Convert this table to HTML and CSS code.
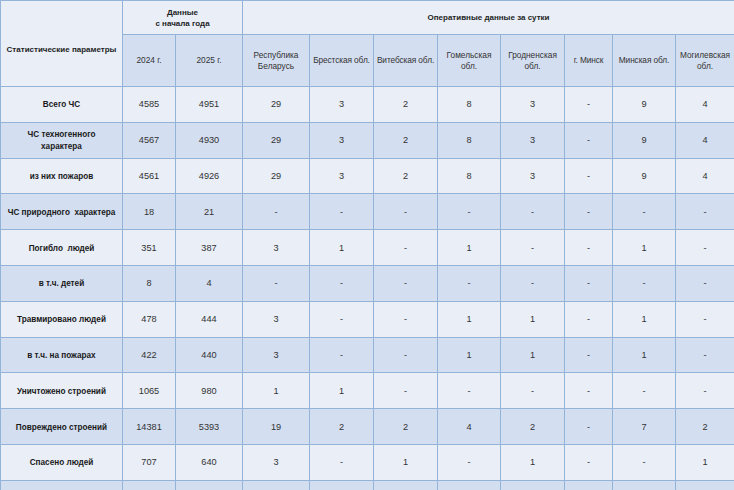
FILE: index.html
```html
<!DOCTYPE html>
<html lang="ru">
<head>
<meta charset="utf-8">
<title>Статистика ЧС</title>
<link rel="stylesheet" href="styles.css">
</head>
<body>
<table class="stats">
  <colgroup>
    <col class="c-param"><col class="c-y"><col class="c-y2">
    <col class="c-rb"><col class="c-br"><col class="c-vi"><col class="c-go">
    <col class="c-gr"><col class="c-mn"><col class="c-mo"><col class="c-mg">
  </colgroup>
  <thead>
    <tr class="h1">
      <th rowspan="2" class="param-head light">Статистические параметры</th>
      <th colspan="2" class="light">Данные<br>с начала года</th>
      <th colspan="9" class="light">Оперативные данные за сутки</th>
    </tr>
    <tr class="h2">
      <th class="sub">2024 г.</th>
      <th class="sub">2025 г.</th>
      <th class="sub">Республика<br>Беларусь</th>
      <th class="sub nowrap">Брестская обл.</th>
      <th class="sub nowrap">Витебская обл.</th>
      <th class="sub">Гомельская<br>обл.</th>
      <th class="sub">Гродненская<br>обл.</th>
      <th class="sub nowrap">г. Минск</th>
      <th class="sub nowrap">Минская обл.</th>
      <th class="sub">Могилевская<br>обл.</th>
    </tr>
  </thead>
  <tbody>
    <tr><th>Всего ЧС</th><td>4585</td><td>4951</td><td>29</td><td>3</td><td>2</td><td>8</td><td>3</td><td>-</td><td>9</td><td>4</td></tr>
    <tr><th>ЧС техногенного<br>характера</th><td>4567</td><td>4930</td><td>29</td><td>3</td><td>2</td><td>8</td><td>3</td><td>-</td><td>9</td><td>4</td></tr>
    <tr><th>из них пожаров</th><td>4561</td><td>4926</td><td>29</td><td>3</td><td>2</td><td>8</td><td>3</td><td>-</td><td>9</td><td>4</td></tr>
    <tr><th>ЧС природного&nbsp; характера</th><td>18</td><td>21</td><td>-</td><td>-</td><td>-</td><td>-</td><td>-</td><td>-</td><td>-</td><td>-</td></tr>
    <tr><th>Погибло&nbsp; людей</th><td>351</td><td>387</td><td>3</td><td>1</td><td>-</td><td>1</td><td>-</td><td>-</td><td>1</td><td>-</td></tr>
    <tr><th>в т.ч. детей</th><td>8</td><td>4</td><td>-</td><td>-</td><td>-</td><td>-</td><td>-</td><td>-</td><td>-</td><td>-</td></tr>
    <tr><th>Травмировано людей</th><td>478</td><td>444</td><td>3</td><td>-</td><td>-</td><td>1</td><td>1</td><td>-</td><td>1</td><td>-</td></tr>
    <tr><th>в т.ч. на пожарах</th><td>422</td><td>440</td><td>3</td><td>-</td><td>-</td><td>1</td><td>1</td><td>-</td><td>1</td><td>-</td></tr>
    <tr><th>Уничтожено строений</th><td>1065</td><td>980</td><td>1</td><td>1</td><td>-</td><td>-</td><td>-</td><td>-</td><td>-</td><td>-</td></tr>
    <tr><th>Повреждено строений</th><td>14381</td><td>5393</td><td>19</td><td>2</td><td>2</td><td>4</td><td>2</td><td>-</td><td>7</td><td>2</td></tr>
    <tr><th>Спасено людей</th><td>707</td><td>640</td><td>3</td><td>-</td><td>1</td><td>-</td><td>1</td><td>-</td><td>-</td><td>1</td></tr>
    <tr><th>&nbsp;</th><td></td><td></td><td></td><td></td><td></td><td></td><td></td><td></td><td></td><td></td></tr>
  </tbody>
</table>
</body>
</html>
```
FILE: styles.css
```css
html, body {
  margin: 0;
  padding: 0;
  background: #ffffff;
}

body {
  font-family: "Liberation Sans", Arial, sans-serif;
  color: #333333;
  overflow: hidden;
}

.stats {
  border-collapse: collapse;
  table-layout: fixed;
  width: 734px;
}

.c-param { width: 122px; }
.c-y { width: 53px; }
.c-y2 { width: 67px; }
.c-rb { width: 67px; }
.c-br { width: 64px; }
.c-vi { width: 64px; }
.c-go { width: 63px; }
.c-gr { width: 64px; }
.c-mn { width: 48px; }
.c-mo { width: 63px; }
.c-mg { width: 59px; }

.stats th,
.stats td {
  border: 1px solid #94b3d9;
  text-align: center;
  vertical-align: middle;
  padding: 0 1px;
  background: #e9eef7;
}

.stats thead th {
  font-size: 8px;
  line-height: 11px;
  color: #1e1e1e;
  font-weight: bold;
}

.stats thead .sub {
  font-weight: normal;
  font-size: 8.3px;
  color: #333333;
  background: #d3def0;
}

.stats thead .nowrap {
  white-space: nowrap;
  letter-spacing: -0.1px;
}

.stats .param-head {
  padding-top: 12px;
}

.h1 { height: 34px; }
.h2 { height: 52px; }

.stats tbody tr { height: 35.8px; }

.stats tbody th {
  font-size: 8.2px;
  line-height: 12px;
  font-weight: bold;
  color: #1a1a1a;
  padding-top: 2px;
}

.stats tbody td {
  font-size: 9.2px;
  color: #333333;
}

.stats tbody tr:nth-child(even) th,
.stats tbody tr:nth-child(even) td {
  background: #d3def0;
}
```
